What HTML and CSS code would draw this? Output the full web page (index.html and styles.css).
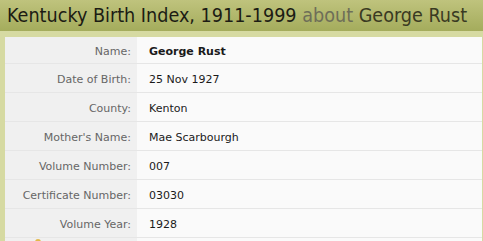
FILE: index.html
```html
<!DOCTYPE html>
<html>
<head>
<meta charset="utf-8">
<link rel="stylesheet" href="styles.css">
</head>
<body>
<div class="page">
  <h1 class="title">Kentucky Birth Index, 1911-1999 <span class="about">about</span> <span class="person">George Rust</span></h1>
  <div class="panel">
    <table class="records">
      <tr><th>Name:</th><td class="strong">George Rust</td></tr>
      <tr><th>Date of Birth:</th><td>25 Nov 1927</td></tr>
      <tr><th>County:</th><td>Kenton</td></tr>
      <tr><th>Mother's Name:</th><td>Mae Scarbourgh</td></tr>
      <tr><th>Volume Number:</th><td>007</td></tr>
      <tr><th>Certificate Number:</th><td>03030</td></tr>
      <tr><th>Volume Year:</th><td>1928</td></tr>
      <tr class="more"><th><span class="dot"></span></th><td></td></tr>
    </table>
  </div>
</div>
</body>
</html>
```
FILE: styles.css
```css
html, body {
  margin: 0;
  padding: 0;
  background: #d6daa2;
  overflow: hidden;
}
.page {
  width: 483px;
  height: 241px;
  overflow: hidden;
  font-family: "DejaVu Sans", Verdana, sans-serif;
}
.title {
  margin: 0;
  height: 31px;
  line-height: 32px;
  padding-left: 7px;
  font-family: "DejaVu Sans Condensed", "DejaVu Sans", sans-serif;
  font-size: 19.6px;
  font-weight: normal;
  color: #1c1c14;
  white-space: nowrap;
  background: linear-gradient(#bfc37d, #a4ac5c);
}
.about { color: #6e6e58; }
.person { color: #3a3a22; }
.panel {
  margin: 6px 1px 0 5px;
  background: #fafafa;
}
.records {
  border-collapse: collapse;
  width: 100%;
  font-size: 11px;
}
.records th,
.records td {
  height: 26px;
  padding-top: 2px;
  padding-bottom: 0;
  border-bottom: 1px solid #e6e6e6;
}
.records th {
  width: 132px;
  box-sizing: border-box;
  background: #f0f0f0;
  color: #666;
  font-weight: normal;
  text-align: right;
  padding-left: 0;
  padding-right: 6px;
}
.records tr:first-child th,
.records tr:first-child td { height: 24px; }
.records td {
  color: #1a1a1a;
  padding-left: 12px;
  padding-right: 0;
}
.records td.strong { font-weight: bold; }
.records tr.more th {
  vertical-align: top;
  text-align: left;
  padding-left: 30px;
  padding-top: 1px;
}
.dot {
  display: block;
  width: 6px;
  height: 6px;
  border-radius: 50%;
  background: #e3b84a;
}
```
